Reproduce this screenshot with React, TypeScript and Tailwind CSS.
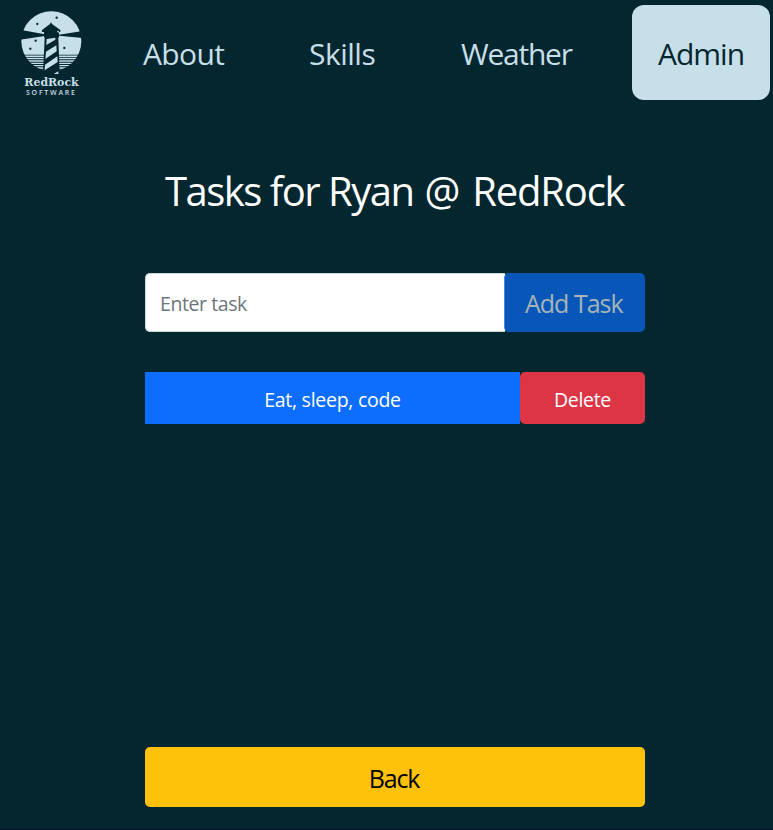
function Logo() {
  return (
    <svg viewBox="0 0 255 315" className="ml-[10px] h-[105px] w-[85px] shrink-0" fill="#c7dfe8">
      <circle cx="124" cy="124" r="90" />
      <g fill="#04262f">
        <path d="M30 89 L104 103 V108 L30 119Z M218 93 L147 104 V107 L218 114Z" />
        <path d="M123 66 L126 72 L151 90 V96 H147 V110 L145 114 L149 222 H99 L104 114 L102 110 V96 H96 V90 L120 72Z" />
        <path d="M34 164h182v2.5H34z M34 171h182v2.5H34z M34 178h182v3H34z M34 185h182v3H34z M34 192h182v3H34z M34 199h182v3H34z M34 206h182v3H34z" />
        <circle cx="82" cy="72" r="3.5" /><circle cx="140" cy="53" r="3.5" />
        <circle cx="77" cy="122" r="3.5" /><circle cx="61" cy="146" r="3.5" /><circle cx="163" cy="144" r="3.5" />
      </g>
      <path d="M110 117 L136 113 V119 L109 135Z M108 155 L139 136 L140 154 L106 177Z M105 194 L142 169 L143 186 L104 211Z M131 222 L145 214 V222Z M142 92 l5 1 l-1 5 l-4-1Z" />
      <text x="43" y="259" textLength="163" lengthAdjust="spacingAndGlyphs" fontFamily='"DejaVu Serif", serif' fontWeight="700" fontSize="35">RedRock</text>
      <text x="48" y="284" textLength="147" fontFamily='"Open Sans", sans-serif' fontWeight="600" fontSize="21">SOFTWARE</text>
    </svg>
  );
}

export default function App() {
  return (
    <div className="flex h-[830px] w-[773px] flex-col overflow-hidden border-b border-[#050f29] bg-[#04262f] font-['Open_Sans',sans-serif] text-white">
      <header className="flex h-[110px] whitespace-nowrap text-[30px] leading-[107px] text-[#c7dfe8]">
        <Logo />
        <nav className="flex">
          <a className="ml-12 w-[81px] tracking-[-0.65px]">About</a>
          <a className="ml-[85px] w-[65px] tracking-[-0.5px]">Skills</a>
          <a className="ml-[87px] w-[111px] tracking-[-1.25px]">Weather</a>
          <a className="ml-[60px] mt-[5px] h-[95px] w-[138px] rounded-[12px] bg-[#c7dfe8] pl-[26px] leading-[97px] tracking-[-1px] text-[#04262f]">Admin</a>
        </nav>
      </header>
      <main className="ml-[145px] flex w-[500px] flex-1 flex-col">
        <h1 className="mt-[50px] h-[60px] whitespace-nowrap pl-5 text-[40px] leading-[61px] tracking-[-1.5px]">
          Tasks for Ryan <span className="ml-0.5 tracking-[-1.2px] [word-spacing:4px]">@ RedRock</span>
        </h1>
        <div className="mt-[53px] flex h-[59px]">
          <div className="w-[360px] rounded-l-[5px] border border-r-0 border-[#ced4da] bg-white pl-3.5 text-[19.5px] leading-[59px] tracking-[-0.42px] text-[#6c757d]">
            Enter task
          </div>
          <button className="-ml-px w-[141px] rounded-[5px] border-l border-[#3f86ee] bg-[#0857b8] pl-5 text-left text-[25px] leading-[61px] tracking-[-1px] text-[#a4b4b7]">
            Add Task
          </button>
        </div>
        <div className="mt-10 flex h-[52px] text-center text-[19.5px] leading-[55px]">
          <div className="w-[375px] bg-[#0d6efd] tracking-[-0.27px]">Eat, sleep, code</div>
          <button className="w-[125px] rounded-[5px] bg-[#dc3545] tracking-[-0.3px]">Delete</button>
        </div>
        <button className="mb-[22px] mt-auto h-[60px] rounded-[5px] bg-[#ffc20a] pr-0.5 text-center text-[25px] leading-[63px] tracking-[-1.2px] text-black">
          Back
        </button>
      </main>
    </div>
  );
}
